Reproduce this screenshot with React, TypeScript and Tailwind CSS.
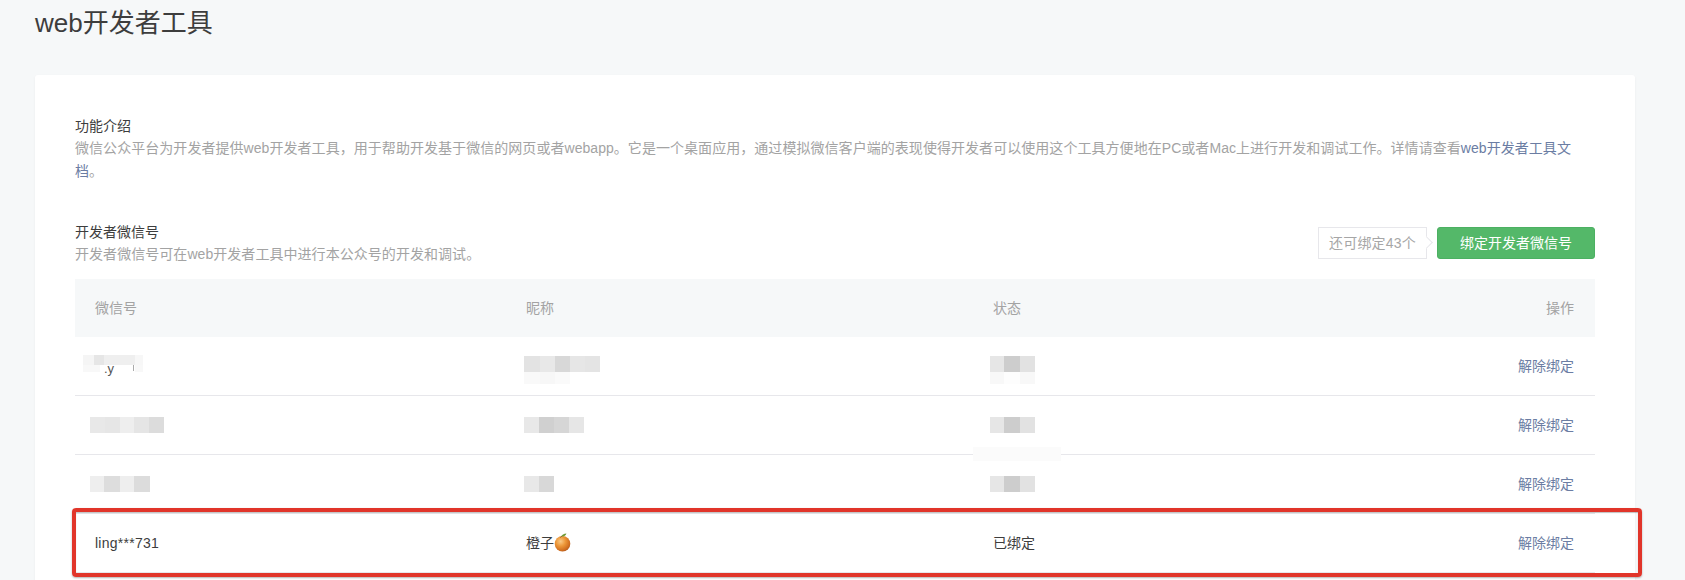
const FONT = "font-['Liberation_Sans','Noto_Sans_CJK_SC',sans-serif]";

type Block = [number, string];

function Strip({ blocks, height }: { blocks: Block[]; height: string }) {
  return (
    <div className={`flex ${height}`}>
      {blocks.map(([w, c], i) => (
        <span key={i} style={{ width: w, backgroundColor: c }} />
      ))}
    </div>
  );
}

function Mosaic({ top, bottom = [], offset = "-ml-[3px]" }: { top: Block[]; bottom?: Block[]; offset?: string }) {
  return (
    <div className={`${offset} ${bottom.length > 0 ? "pb-1" : ""} flex flex-col`}>
      <Strip blocks={top} height="h-4" />
      {bottom.length > 0 && (
        <div className="-mb-3">
          <Strip blocks={bottom} height="h-3" />
        </div>
      )}
    </div>
  );
}

function Orange() {
  return (
    <svg width="17" height="19" viewBox="0 0 17 19" className="inline-block align-[-4px]">
      <defs>
        <radialGradient id="orangeBody" cx="38%" cy="35%" r="70%">
          <stop offset="0%" stopColor="#f9c987" />
          <stop offset="45%" stopColor="#ec9638" />
          <stop offset="85%" stopColor="#cf6d20" />
          <stop offset="100%" stopColor="#b05a1e" />
        </radialGradient>
      </defs>
      <circle cx="8.5" cy="10.7" r="7.8" fill="url(#orangeBody)" />
      <path d="M7 3.6C7.6 1.8 10 .6 12.4 .4 12 2.4 10 3.8 7 3.6Z" fill="#6f9a35" />
      <path d="M7.4 3.4 6.6 4.4" stroke="#5a4a20" strokeWidth="1" />
    </svg>
  );
}

const rows: { c1: React.ReactNode; c2: React.ReactNode; c3: React.ReactNode; smear?: boolean }[] = [
  {
    c1: (
      <div className="relative -ml-3 pb-[5px]">
        <Strip blocks={[[11, "#f5f5f5"], [10, "#e6e6e6"], [31, "#efefef"], [8, "#f7f7f7"]]} height="h-2.5" />
        <Strip blocks={[[17, "#f8f8f8"], [35, "#ffffff"], [8, "#f8f8f8"]]} height="h-[7px]" />
        <span className="absolute left-[21px] top-[6px] text-[13px] leading-4 text-[#555]">.y</span>
        <span className="absolute left-[50px] top-[10px] h-1.5 w-px bg-[#aaa]" />
      </div>
    ),
    c2: (
      <Mosaic
        offset="-ml-0.5"
        top={[[16, "#e3e3e3"], [15, "#e8e8e8"], [15, "#d8d8d8"], [15, "#e6e6e6"], [15, "#e4e4e4"]]}
        bottom={[[16, "#f9f9f9"], [15, "#f7f7f7"], [15, "#fafafa"]]}
      />
    ),
    c3: (
      <Mosaic
        top={[[14, "#e6e6e6"], [16, "#cdcdcd"], [15, "#e2e2e2"]]}
        bottom={[[14, "#f8f8f8"], [16, "#fdfdfd"], [15, "#f8f8f8"]]}
      />
    ),
  },
  {
    c1: (
      <Mosaic
        offset="-ml-[5px]"
        top={[[15, "#e8e8e8"], [15, "#e6e6e6"], [14, "#eeeeee"], [15, "#e5e5e5"], [15, "#dcdcdc"]]}
      />
    ),
    c2: (
      <Mosaic
        offset="-ml-0.5"
        top={[[15, "#e8e8e8"], [15, "#d0d0d0"], [15, "#d6d6d6"], [15, "#e6e6e6"]]}
      />
    ),
    c3: <Mosaic top={[[14, "#e6e6e6"], [16, "#cdcdcd"], [15, "#e2e2e2"]]} />,
    smear: true,
  },
  {
    c1: (
      <Mosaic
        offset="-ml-[5px]"
        top={[[14, "#eeeeee"], [16, "#dddddd"], [14, "#eeeeee"], [16, "#dcdcdc"]]}
      />
    ),
    c2: <Mosaic offset="-ml-0.5" top={[[15, "#e8e8e8"], [15, "#d8d8d8"]]} />,
    c3: <Mosaic top={[[14, "#e6e6e6"], [16, "#cdcdcd"], [15, "#e2e2e2"]]} />,
  },
  {
    c1: <span className="tracking-[0.25px]">ling***731</span>,
    c2: (
      <span>
        橙子
        <Orange />
      </span>
    ),
    c3: "已绑定",
  },
];

export default function App() {
  return (
    <div className={`${FONT} h-[580px] overflow-hidden bg-[#f6f8f9] pl-[35px] pr-[50px] text-sm text-[#3d3d3d]`}>
      <h1 className="h-[46px] text-[26px] font-normal leading-[46px]">web开发者工具</h1>
      <main className="mt-[29px] rounded-[3px] bg-white px-10 pt-10 pb-10 shadow-[0_1px_2px_rgba(150,150,150,0.12)]">
        <section>
          <h2 className="text-sm font-normal leading-[22px]">功能介绍</h2>
          <p className="max-w-[1505px] text-sm leading-[22.5px] tracking-[0.05px] text-[#a3a3a3]">
            微信公众平台为开发者提供web开发者工具，用于帮助开发基于微信的网页或者webapp。它是一个桌面应用，通过模拟微信客户端的表现使得开发者可以使用这个工具方便地在PC或者Mac上进行开发和调试工作。详情请查看
            <a className="text-[#6b7da3]">web开发者工具文档</a>。
          </p>
        </section>

        <section className="mt-[39px]">
          <div className="flex items-center justify-between">
            <div>
              <h2 className="text-sm font-normal leading-[22px]">开发者微信号</h2>
              <p className="text-sm leading-[22px] tracking-[0.05px] text-[#a3a3a3]">开发者微信号可在web开发者工具中进行本公众号的开发和调试。</p>
            </div>
            <div className="flex items-center gap-2.5">
              <div className="relative flex h-8 w-[109px] items-center justify-center border border-[#e7e7eb] bg-white text-sm tracking-[0.2px] text-[#a6a6a6]">
                还可绑定43个
                <span className="absolute -right-[5px] top-[10px] h-[9px] w-[9px] rotate-45 border-t border-r border-[#e7e7eb] bg-white" />
              </div>
              <button className="flex h-8 w-[158px] items-center justify-center rounded-[3px] border border-[#4cb062] bg-[#54b869] text-sm text-white">
                绑定开发者微信号
              </button>
            </div>
          </div>

          <div className="relative mt-3.5">
            <table className="w-full table-fixed border-separate border-spacing-0">
              <colgroup>
                <col className="w-[431px]" />
                <col className="w-[467px]" />
                <col />
                <col className="w-[140px]" />
              </colgroup>
              <thead>
                <tr className="h-[58px] bg-[#f6f8f9] text-left text-[#a3a3a3]">
                  <th className="pl-5 font-normal">微信号</th>
                  <th className="pl-5 font-normal">昵称</th>
                  <th className="pl-5 font-normal">状态</th>
                  <th className="pr-[21px] text-right font-normal">操作</th>
                </tr>
              </thead>
              <tbody>
                {rows.map((r, i) => (
                  <tr key={i} className="h-[59px]">
                    <td className="border-b border-[#e7e7eb] pl-5">{r.c1}</td>
                    <td className="border-b border-[#e7e7eb] pl-5">{r.c2}</td>
                    <td className="relative border-b border-[#e7e7eb] pl-5">
                      {r.c3}
                      {r.smear && (
                        <span className="absolute -bottom-[7px] left-0 h-3.5 w-[88px] bg-[#fbfbfb]" />
                      )}
                    </td>
                    <td className="border-b border-[#e7e7eb] pr-[21px] text-right">
                      <a className="text-[#6b7da3]">解除绑定</a>
                    </td>
                  </tr>
                ))}
              </tbody>
            </table>
            <div className="absolute -left-[3px] top-[229px] h-[69px] w-[1570px] rounded-[4px] border-4 border-[#e1352a] shadow-[0_1px_2px_rgba(0,0,0,0.3),inset_0_1px_1px_rgba(0,0,0,0.25)]" />
          </div>
        </section>
      </main>
    </div>
  );
}
